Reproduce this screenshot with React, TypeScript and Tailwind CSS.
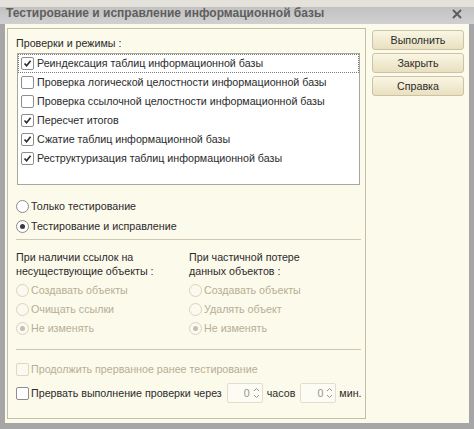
import React from "react";

const font = { fontFamily: '"Liberation Sans", Arial, sans-serif' };

function Check({ checked, disabled }: { checked?: boolean; disabled?: boolean }) {
  return (
    <span
      className={
        "flex h-[13px] w-[13px] shrink-0 items-center justify-center rounded-[2px] border " +
        (disabled ? "border-[#dcd7c6] bg-[#fcfaee]" : "border-[#8e8e8e] bg-white")
      }
    >
      {checked && (
        <svg width="9" height="9" viewBox="0 0 9 9">
          <path d="M1.5 4.5 L3.6 6.8 L7.6 1.8" fill="none" stroke="#2a2a2a" strokeWidth="1.6" />
        </svg>
      )}
    </span>
  );
}

function Radio({ checked, disabled }: { checked?: boolean; disabled?: boolean }) {
  return (
    <span
      className={
        "flex h-[13px] w-[13px] shrink-0 items-center justify-center rounded-full border " +
        (disabled ? "border-[#d8d3c2] bg-[#fcfaee]" : "border-[#8a8a8a] bg-white")
      }
    >
      {checked && (
        <span className={"h-[5px] w-[5px] rounded-full " + (disabled ? "bg-[#c4bfae]" : "bg-[#3a3a3a]")} />
      )}
    </span>
  );
}

function ListRow({ label, checked, focus }: { label: string; checked?: boolean; focus?: boolean }) {
  return (
    <div
      className={
        "flex h-[19px] items-center gap-[3px] pl-[2px] " +
        (focus ? "border border-dotted border-[#7a7a7a]" : "border border-transparent")
      }
    >
      <Check checked={checked} />
      <span className="whitespace-nowrap text-[10.7px] leading-none text-[#2b2b2b]">{label}</span>
    </div>
  );
}

function RadioRow({ label, checked, disabled }: { label: string; checked?: boolean; disabled?: boolean }) {
  return (
    <div className="flex h-[19px] items-center gap-[2px]">
      <Radio checked={checked} disabled={disabled} />
      <span className={"whitespace-nowrap text-[10.7px] leading-none " + (disabled ? "text-[#b6ae96]" : "text-[#2b2b2b]")}>{label}</span>
    </div>
  );
}

function Spin() {
  return (
    <div className="flex h-[20px] w-[36px] items-center justify-end gap-[3px] rounded-[2px] border border-[#e2ddcc] bg-[#fdfcf4] pr-[2px]">
      <span className="text-[10.7px] leading-none text-[#9a9484]">0</span>
      <svg width="7" height="14" viewBox="0 0 7 14">
        <path d="M1 5 L3.5 2.5 L6 5" fill="none" stroke="#9a9484" strokeWidth="1" />
        <path d="M1 9 L3.5 11.5 L6 9" fill="none" stroke="#9a9484" strokeWidth="1" />
      </svg>
    </div>
  );
}

function Btn({ label }: { label: string }) {
  return (
    <div className="flex h-[20px] w-[92px] items-center justify-center rounded-[3px] border border-[#cbc3a4] bg-gradient-to-b from-[#faf6e4] to-[#e9e0c0] text-[10.7px] leading-none text-[#2b2b2b]">
      {label}
    </div>
  );
}

export default function App() {
  return (
    <div className="flex h-[429px] w-[474px] flex-col bg-[#a6a6a6]" style={font}>
      <div className="h-[7px] bg-[#e4e2da]" />
      <div className="flex h-[17px] items-start justify-between bg-gradient-to-b from-[#c2c2c2] to-[#d0d0d0] pl-[6px] pr-[12px]">
        <span className="whitespace-nowrap text-[12px] font-bold leading-[13px] text-[#5e5e5e]">
          Тестирование и исправление информационной базы
        </span>
        <svg width="10" height="10" viewBox="0 0 10 10" className="mt-[2px]">
          <path d="M1 1 L9 9 M9 1 L1 9" stroke="#5a5a5a" strokeWidth="1.8" />
        </svg>
      </div>
      <div className="mx-[5px] mb-[6px] flex flex-1 gap-[6px] bg-[#fcfaeb] pl-[2px] pr-[3px] pt-[4px] pb-[4px]">
        <div className="flex w-[359px] flex-col border border-[#c3beaa] pl-[8px] pr-[5px] pt-[6px]">
          <div className="h-[17px] text-[10.7px] leading-[17px] text-[#2b2b2b]">Проверки и режимы :</div>
          <div className="ml-[1px] mt-[1px] h-[132px] border border-[#a9a69a] bg-white">
            <ListRow label="Реиндексация таблиц информационной базы" checked focus />
            <ListRow label="Проверка логической целостности информационной базы" />
            <ListRow label="Проверка ссылочной целостности информационной базы" />
            <ListRow label="Пересчет итогов" checked />
            <ListRow label="Сжатие таблиц информационной базы" checked />
            <ListRow label="Реструктуризация таблиц информационной базы" checked />
          </div>
          <div className="mt-[12px] flex flex-col gap-[1px]">
            <RadioRow label="Только тестирование" />
            <RadioRow label="Тестирование и исправление" checked />
          </div>
          <div className="mt-[3px] h-[1px] w-[345px] bg-[#cdc8b4]" />
          <div className="mt-[10px] flex">
            <div className="flex w-[173px] flex-col">
              <div className="text-[10.7px] leading-[14px] text-[#2b2b2b]">
                При наличии ссылок на
                <br />
                несуществующие объекты :
              </div>
              <div className="mt-[3px] flex flex-col">
                <RadioRow label="Создавать объекты" disabled />
                <RadioRow label="Очищать ссылки" disabled />
                <RadioRow label="Не изменять" checked disabled />
              </div>
            </div>
            <div className="flex flex-col">
              <div className="text-[10.7px] leading-[14px] text-[#2b2b2b]">
                При частичной потере
                <br />
                данных объектов :
              </div>
              <div className="mt-[3px] flex flex-col">
                <RadioRow label="Создавать объекты" disabled />
                <RadioRow label="Удалять объект" disabled />
                <RadioRow label="Не изменять" checked disabled />
              </div>
            </div>
          </div>
          <div className="mt-[11px] h-[1px] w-[345px] bg-[#cdc8b4]" />
          <div className="mt-[10px] flex h-[19px] items-center gap-[2px]">
            <Check disabled />
            <span className="whitespace-nowrap text-[10.7px] leading-none text-[#b6ae96]">Продолжить прерванное ранее тестирование</span>
          </div>
          <div className="mt-[3px] flex h-[22px] items-center">
            <Check />
            <span className="ml-[2px] whitespace-nowrap text-[10.7px] leading-none text-[#2b2b2b]">Прервать выполнение проверки через</span>
            <span className="ml-[5px]"><Spin /></span>
            <span className="ml-[4px] text-[10.7px] leading-none text-[#2b2b2b]">часов</span>
            <span className="ml-[5px]"><Spin /></span>
            <span className="ml-[3px] text-[10.7px] leading-none text-[#2b2b2b]">мин.</span>
          </div>
        </div>
        <div className="flex flex-col gap-[3px] pt-[2px]">
          <Btn label="Выполнить" />
          <Btn label="Закрыть" />
          <Btn label="Справка" />
        </div>
      </div>
    </div>
  );
}
